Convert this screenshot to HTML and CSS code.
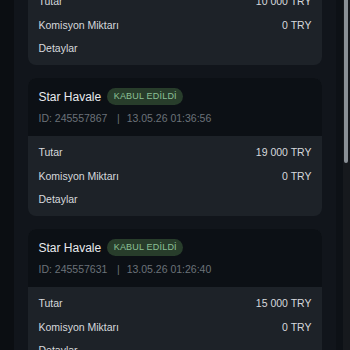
FILE: index.html
```html
<!DOCTYPE html>
<html lang="tr">
<head>
<meta charset="utf-8">
<title>İşlemler</title>
<link rel="stylesheet" href="styles.css">
</head>
<body>
<div class="screen">
  <div class="edge"></div>
  <main class="panel">
    <div class="list">
      <section class="card">
        <header class="card-head">
          <div class="title-row"><span class="title">Star Havale</span><span class="badge">KABUL EDİLDİ</span></div>
          <div class="meta"><span>ID: 245558012</span><span class="sep">|</span><span>13.05.26 01:41:12</span></div>
        </header>
        <div class="card-body">
          <div class="row"><span>Tutar</span><span>10 000 TRY</span></div>
          <div class="row"><span>Komisyon Miktarı</span><span>0 TRY</span></div>
          <div class="row"><span>Detaylar</span></div>
        </div>
      </section>
      <section class="card">
        <header class="card-head">
          <div class="title-row"><span class="title">Star Havale</span><span class="badge">KABUL EDİLDİ</span></div>
          <div class="meta"><span>ID: 245557867</span><span class="sep">|</span><span>13.05.26 01:36:56</span></div>
        </header>
        <div class="card-body">
          <div class="row"><span>Tutar</span><span>19 000 TRY</span></div>
          <div class="row"><span>Komisyon Miktarı</span><span>0 TRY</span></div>
          <div class="row"><span>Detaylar</span></div>
        </div>
      </section>
      <section class="card">
        <header class="card-head">
          <div class="title-row"><span class="title">Star Havale</span><span class="badge">KABUL EDİLDİ</span></div>
          <div class="meta"><span>ID: 245557631</span><span class="sep">|</span><span>13.05.26 01:26:40</span></div>
        </header>
        <div class="card-body">
          <div class="row"><span>Tutar</span><span>15 000 TRY</span></div>
          <div class="row"><span>Komisyon Miktarı</span><span>0 TRY</span></div>
          <div class="row"><span>Detaylar</span></div>
        </div>
      </section>
    </div>
  </main>
  <div class="edge-right"></div>
  <div class="scrollbar"><div class="thumb"></div></div>
</div>
</body>
</html>
```
FILE: styles.css
```css
html, body {
  margin: 0;
  padding: 0;
  height: 100%;
  background: #0c0f13;
  overflow: hidden;
}
body {
  font-family: "Liberation Sans", Arial, sans-serif;
  color: #d4d7db;
}
.screen {
  display: flex;
  height: 350px;
  width: 350px;
}
.edge {
  width: 14px;
  flex: none;
  background: #0b0e12;
}
.panel {
  width: 322px;
  flex: none;
  box-sizing: border-box;
  padding: 0 14px;
  background: #11151b;
  overflow: hidden;
}
.list {
  display: flex;
  flex-direction: column;
  gap: 13px;
  margin-top: -73px;
}
.card {
  border-radius: 8px;
  overflow: hidden;
  background: #1d2228;
}
.card-head {
  background: #0c1015;
  padding: 10px 10.5px 11px;
}
.title-row {
  display: flex;
  align-items: center;
  gap: 6px;
  height: 17px;
}
.title {
  font-size: 12px;
  color: #e8eaed;
  line-height: 16px;
}
.badge {
  height: 17px;
  box-sizing: border-box;
  padding: 0 6.5px;
  border-radius: 9px;
  background: #283d2b;
  color: #8cc196;
  font-size: 9px;
  line-height: 17px;
  letter-spacing: 0.2px;
}
.meta {
  margin-top: 6px;
  font-size: 10.5px;
  line-height: 14px;
  color: #6b7279;
  display: flex;
}
.sep {
  margin: 0 7px 0 9.5px;
}
.card-body {
  padding: 8px 10.5px 9px;
  display: flex;
  flex-direction: column;
  gap: 7.5px;
}
.row {
  display: flex;
  justify-content: space-between;
  font-size: 10.5px;
  line-height: 16px;
  color: #d6d9dd;
}
.edge-right {
  width: 7px;
  flex: none;
  background: #0d1116;
}
.scrollbar {
  width: 7px;
  flex: none;
  background: #16191d;
  padding: 0 2px 0 1px;
  box-sizing: border-box;
}
.thumb {
  height: 163px;
  background: #8a9096;
  border-radius: 0 0 2px 2px;
}
```
